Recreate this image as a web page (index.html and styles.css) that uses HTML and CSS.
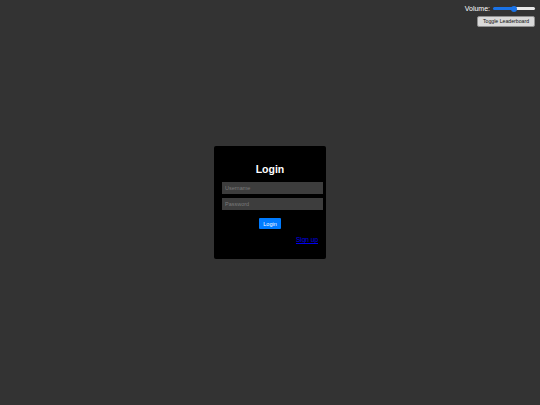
FILE: index.html
```html
<!DOCTYPE html>
<html>
<head>
<meta charset="utf-8">
<link rel="stylesheet" href="styles.css">
</head>
<body>
<div class="controls">
  <label class="volume">Volume: <input class="slider" type="range" min="0" max="100" value="50"></label>
  <button class="toggle">Toggle Leaderboard</button>
</div>
<main class="stage">
  <form class="login-box">
    <h2 class="title">Login</h2>
    <input class="field" type="text" placeholder="Username">
    <input class="field" type="password" placeholder="Password">
    <div class="actions"><button class="btn" type="button">Login</button></div>
    <div class="link-row"><a class="signup" href="#">Sign up</a></div>
  </form>
</main>
</body>
</html>
```
FILE: styles.css
```css
html, body {
  margin: 0;
  padding: 0;
  background: #333333;
  font-family: "Liberation Sans", Arial, sans-serif;
}
.controls {
  position: absolute;
  top: 4px;
  right: 5px;
  display: flex;
  flex-direction: column;
  align-items: flex-end;
  gap: 3px;
}
.volume {
  display: flex;
  align-items: center;
  gap: 3px;
  color: #ffffff;
  font-size: 7px;
  height: 9px;
}
.slider {
  -webkit-appearance: none;
  appearance: none;
  width: 42px;
  height: 7px;
  margin: 0;
  background: transparent;
}
.slider::-webkit-slider-runnable-track {
  height: 3px;
  border-radius: 2px;
  background: linear-gradient(to right, #1a73e8 0%, #1a73e8 50%, #e8e8e8 50%, #e8e8e8 100%);
}
.slider::-webkit-slider-thumb {
  -webkit-appearance: none;
  width: 6px;
  height: 6px;
  border-radius: 50%;
  background: #1a73e8;
  margin-top: -1.5px;
}
.toggle {
  width: 58px;
  height: 11px;
  padding: 0;
  border: 1px solid #8f8f8f;
  border-radius: 2px;
  background: #d9d9d9;
  color: #111;
  font-family: "Liberation Sans", Arial, sans-serif;
  font-size: 5.2px;
  line-height: 9px;
}
.stage {
  min-height: 100vh;
  display: flex;
  align-items: center;
  justify-content: center;
}
.login-box {
  width: 112px;
  height: 113px;
  box-sizing: border-box;
  padding: 16px 8px 0 8px;
  background: #000000;
  border-radius: 2px;
  display: flex;
  flex-direction: column;
}
.title {
  margin: 0 0 6px 0;
  color: #ffffff;
  font-size: 10.5px;
  line-height: 14px;
  text-align: center;
  font-weight: bold;
}
.field {
  width: 101px;
  height: 12px;
  box-sizing: border-box;
  margin: 0 0 4px 0;
  padding: 0 3px;
  border: none;
  background: #3d3d3d;
  color: #fff;
  font-family: "Liberation Sans", Arial, sans-serif;
  font-size: 5.5px;
  outline: none;
}
.field::placeholder {
  color: #7a7a7a;
}
.actions {
  display: flex;
  justify-content: center;
  margin-top: 4px;
}
.btn {
  width: 22px;
  height: 11px;
  padding: 0;
  border: none;
  border-radius: 1px;
  background: #007bff;
  color: #ffffff;
  font-family: "Liberation Sans", Arial, sans-serif;
  font-size: 5.5px;
}
.link-row {
  text-align: right;
  margin-top: 3px;
  line-height: 9px;
}
.signup {
  color: #0000ee;
  font-size: 6.5px;
}
```
